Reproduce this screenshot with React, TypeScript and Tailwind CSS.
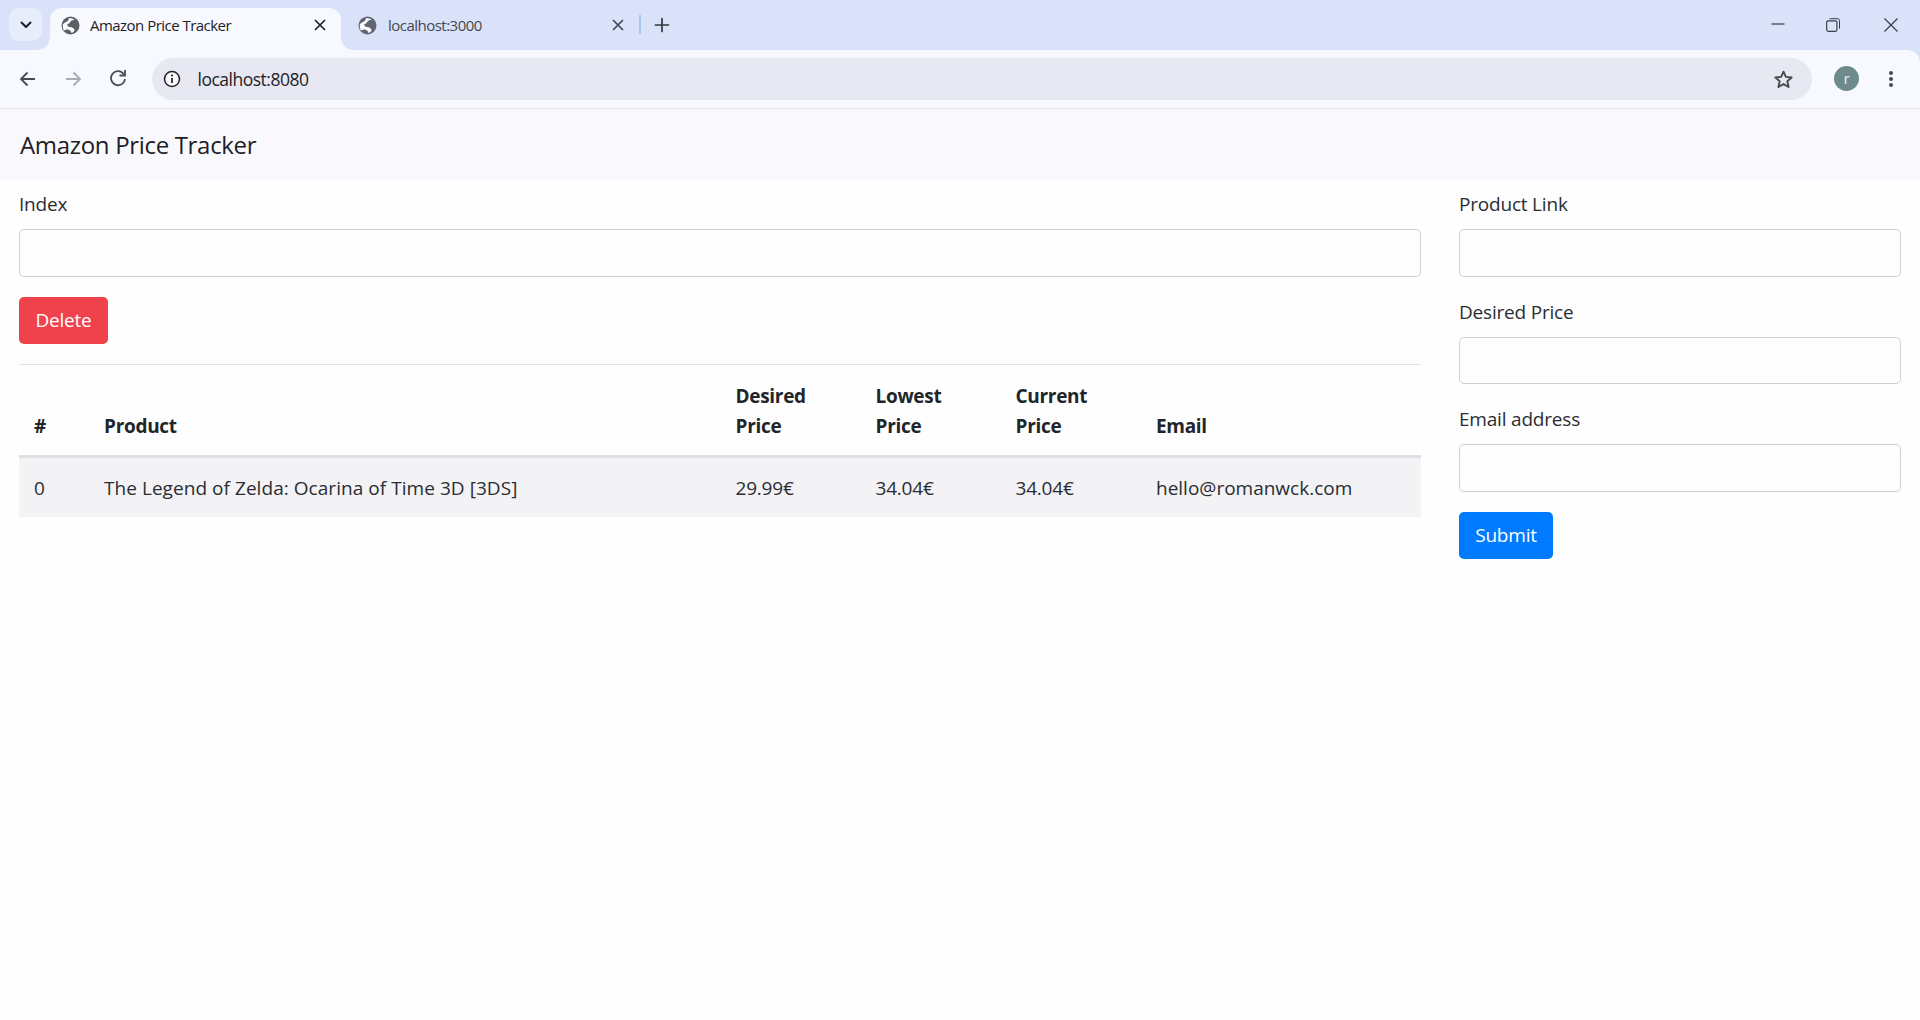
import React from "react";

const font = "font-['Open_Sans','Noto_Sans',sans-serif]";

function Globe({ color }: { color: string }) {
  return (
    <svg width="19" height="19" viewBox="0 0 19 19" className="shrink-0">
      <circle cx="9.5" cy="9.5" r="9" fill={color} />
      <path d="M3 14.500c2-1 3.500-1.200 5-.6 1.600.7 2.200 1.600 2.600 3.200 1.600-.6 2.700-2 3-3.200-.5-1.600-2.500-2.500-4.400-2.800C7 10.700 6 9.800 6.300 8.300 7.800 7.600 9 6.900 9.500 5.500 10.500 4.500 12 4 13.500 3.800 12 2.600 9.500 2 7.500 2.500 8 4 7 5.200 5 6 3.800 6.500 2.500 7.500 1.800 8.500 1.600 10.800 2 13 3 14.500Z" fill="#fbfbfe" />
    </svg>
  );
}

function CloseX({ color }: { color: string }) {
  return (
    <svg width="12" height="12" viewBox="0 0 12 12" className="shrink-0">
      <path d="M1.500 1.500 10.500 10.500M10.500 1.500 1.500 10.500" stroke={color} strokeWidth="1.700" strokeLinecap="round" />
    </svg>
  );
}

function TabStrip() {
  return (
    <div className="h-[50px] bg-[#d9e2f9] flex items-start relative">
      <div className="ml-[9px] mt-[8px] w-[33px] h-[33px] rounded-[10px] bg-[#e8edfc] flex items-center justify-center shrink-0">
        <svg width="14" height="10" viewBox="0 0 14 10">
          <path d="M2.500 2.500 7 7l4.500-4.500" stroke="#1c1f26" strokeWidth="2" fill="none" strokeLinecap="round" strokeLinejoin="round" />
        </svg>
      </div>
      <div className="ml-[8px] mt-[8px] w-[291px] h-[42px] rounded-t-[12px] bg-[#f8f9fe] flex items-center pl-[11px] pr-[15px] pb-[8px] relative shrink-0">
        <div className="absolute left-[-12px] bottom-0 w-[12px] h-[12px] bg-[radial-gradient(circle_at_0_0,#d9e2f9_11.500px,#f8f9fe_12px)]" />
        <div className="absolute right-[-12px] bottom-0 w-[12px] h-[12px] bg-[radial-gradient(circle_at_100%_0,#d9e2f9_11.500px,#f8f9fe_12px)]" />
        <Globe color="#5c6066" />
        <span className={`ml-[10px] text-[15px] text-[#1f2126] tracking-[-0.53px] ${font}`}>Amazon Price Tracker</span>
        <span className="ml-auto"><CloseX color="#1c1f26" /></span>
      </div>
      <div className="ml-[7px] mt-[8px] w-[291px] h-[42px] flex items-center pl-[10px] pr-[15px] pb-[8px] shrink-0">
        <Globe color="#5f6673" />
        <span className={`ml-[11px] text-[15px] text-[#45484f] tracking-[-0.52px] ${font}`}>localhost:3000</span>
        <span className="ml-auto"><CloseX color="#44474f" /></span>
      </div>
      <div className="mt-[15px] w-[2px] h-[19px] bg-[#a9c2ee] shrink-0" />
      <svg width="16" height="16" viewBox="0 0 16 16" className="ml-[13px] mt-[17px] shrink-0">
        <path d="M8 1.500v13M1.500 8h13" stroke="#30343b" strokeWidth="1.700" strokeLinecap="round" />
      </svg>
      <div className="ml-auto flex items-start shrink-0">
        <svg width="14" height="14" viewBox="0 0 14 14" className="mt-[17px]">
          <path d="M0.500 7h13" stroke="#3a3d46" strokeWidth="1.200" />
        </svg>
        <svg width="14" height="14" viewBox="0 0 14 14" className="ml-[41px] mt-[18px]">
          <rect x="0.700" y="2.800" width="10.200" height="10.500" rx="1.500" fill="none" stroke="#3a3d46" strokeWidth="1.200" />
          <path d="M3.500 .7h8a2 2 0 0 1 2 2v8" fill="none" stroke="#3a3d46" strokeWidth="1" />
        </svg>
        <svg width="14" height="14" viewBox="0 0 14 14" className="ml-[44px] mr-[22px] mt-[18px]">
          <path d="M.5.5l13 13M13.500.5l-13 13" stroke="#3a3d46" strokeWidth="1.200" />
        </svg>
      </div>
    </div>
  );
}

function Toolbar() {
  return (
    <div className="h-[59px] bg-[#f8f9fe] border-b border-[#e2e3e9] flex items-center relative">
      <div className="absolute right-0 top-0 w-[12px] h-[12px] bg-[radial-gradient(circle_at_0_100%,#f8f9fe_11.500px,#d9e2f9_12px)]" />
      <svg width="20" height="20" viewBox="0 0 20 20" className="ml-[18px] shrink-0">
        <path d="M17 10H3.500M9.500 3.500 3 10l6.500 6.500" stroke="#474b52" strokeWidth="1.800" fill="none" />
      </svg>
      <svg width="20" height="20" viewBox="0 0 20 20" className="ml-[25px] shrink-0">
        <path d="M3 10h13.500M10.500 3.500 17 10l-6.500 6.500" stroke="#a9abb2" strokeWidth="1.800" fill="none" />
      </svg>
      <svg width="20" height="20" viewBox="0 0 20 20" className="ml-[25px] mb-[2px] shrink-0">
        <path d="M15.800 6.200A7 7 0 1 0 17 11" stroke="#474b52" strokeWidth="1.800" fill="none" />
        <path d="M17 2v5.500h-5.500" stroke="#474b52" strokeWidth="1.800" fill="none" />
      </svg>
      <div className="ml-[24px] w-[1660px] h-[42px] rounded-full bg-[#e8e8f2] flex items-center shrink-0 relative">
        <svg width="18" height="18" viewBox="0 0 18 18" className="ml-[11px] shrink-0">
          <circle cx="9" cy="9" r="7.500" fill="#fbfbfe" stroke="#25272c" strokeWidth="1.600" />
          <path d="M9 8v5" stroke="#25272c" strokeWidth="1.800" />
          <circle cx="9" cy="5.500" r="1.100" fill="#25272c" />
        </svg>
        <span className={`ml-[16.500px] text-[17.500px] text-[#202227] tracking-[-0.5px] ${font}`}>localhost:8080</span>
        <svg width="21" height="21" viewBox="0 0 22 22" className="ml-auto mr-[18.500px] shrink-0">
          <path d="m11 2.800 2.500 5.500 6 .6-4.500 4 1.300 6-5.300-3.100-5.300 3.100 1.300-6-4.500-4 6-.6z" fill="none" stroke="#474b52" strokeWidth="2" strokeLinejoin="round" />
        </svg>
      </div>
      <div className="ml-[22px] w-[25px] h-[25px] rounded-full bg-[#6f8a8b] flex items-center justify-center shrink-0 mb-[1px]">
        <span className={`text-[14px] text-[#f0f5f5] ${font}`}>r</span>
      </div>
      <div className="ml-[30px] flex flex-col gap-[2px] shrink-0 mb-[1px]">
        <div className="w-[4px] h-[4px] rounded-full bg-[#474b52]" />
        <div className="w-[4px] h-[4px] rounded-full bg-[#474b52]" />
        <div className="w-[4px] h-[4px] rounded-full bg-[#474b52]" />
      </div>
    </div>
  );
}

function Field({ label }: { label: string }) {
  return (
    <div className="mb-[20px]">
      <div className="h-[30px] leading-[31px] mb-[10px] text-[19px] text-[#2a2d34]">{label}</div>
      <div className="h-[47.500px] bg-[#fefefe] border-[1.250px] border-[#cfd1d6] rounded-[5px]" />
    </div>
  );
}

const th = "px-[15px] pt-[16px] pb-[14.500px] align-bottom text-left font-bold text-[19px] leading-[30px] text-[#212529] tracking-[-0.3px] border-b-[3px] border-[#dfe0e3]";
const td = "px-[15px] pt-[1px] h-[60.500px] text-[19px] leading-[30px] text-[#2a2d34]";

export default function App() {
  return (
    <div className={`min-h-screen bg-[#fefefe] ${font}`}>
      <TabStrip />
      <Toolbar />
      <div className="h-[71px] bg-[#f9f9fd] flex items-center px-[20px] text-[24px] text-[#1e2024] tracking-[-0.32px]">
        Amazon Price Tracker
      </div>
      <div className="flex pt-[9px] px-[19px] tracking-[-0.2px]">
        <div className="w-[1402px] shrink-0">
          <Field label="Index" />
          <button className="block w-[89px] h-[47px] pt-[1px] rounded-[5px] bg-[#f0424c] text-white text-[19px]">Delete</button>
          <div className="mt-[20px] h-[1.250px] bg-[#e2e3e6]" />
          <table className="w-full table-fixed border-collapse">
            <colgroup>
              <col className="w-[70px]" />
              <col className="w-[631.500px]" />
              <col className="w-[140px]" />
              <col className="w-[140px]" />
              <col className="w-[140.500px]" />
              <col className="w-[280px]" />
            </colgroup>
            <thead>
              <tr>
                <th className={th}>#</th>
                <th className={th}>Product</th>
                <th className={th}>Desired Price</th>
                <th className={th}>Lowest Price</th>
                <th className={th}>Current Price</th>
                <th className={th}>Email</th>
              </tr>
            </thead>
            <tbody>
              <tr className="bg-[#f3f2f5]">
                <td className={td}>0</td>
                <td className={`${td} tracking-[0.05px]`}>The Legend of Zelda: Ocarina of Time 3D [3DS]</td>
                <td className={td}>29.99€</td>
                <td className={td}>34.04€</td>
                <td className={td}>34.04€</td>
                <td className={`${td} tracking-[0px]`}>hello@romanwck.com</td>
              </tr>
            </tbody>
          </table>
        </div>
        <div className="ml-[38px] w-[442px] shrink-0">
          <Field label="Product Link" />
          <Field label="Desired Price" />
          <Field label="Email address" />
          <button className="block w-[94px] h-[47px] pt-[1px] rounded-[5px] bg-[#007bff] text-white text-[19px]">Submit</button>
        </div>
      </div>
    </div>
  );
}
